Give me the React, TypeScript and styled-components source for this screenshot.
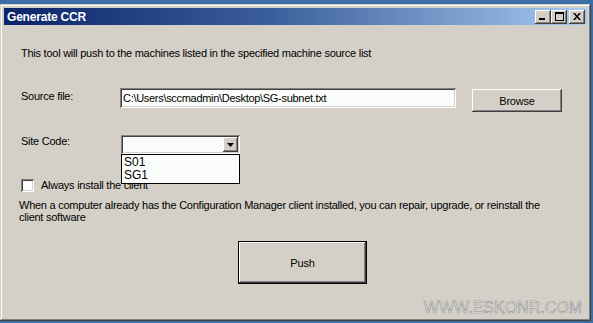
import styled, { createGlobalStyle } from 'styled-components';

const GlobalStyle = createGlobalStyle`
  html, body {
    margin: 0;
    padding: 0;
    background: #3a6ea5;
    width: 593px;
    height: 323px;
    overflow: hidden;
  }
  body {
    font-family: "Liberation Sans", Arial, sans-serif;
    font-size: 11px;
    color: #000;
  }
`;

const raised = `
  box-shadow: inset -1px -1px #404040, inset 1px 1px #ffffff,
    inset -2px -2px #808080, inset 2px 2px #d4d0c8;
`;

const sunken = `
  box-shadow: inset 1px 1px #808080, inset -1px -1px #ffffff,
    inset 2px 2px #404040, inset -2px -2px #d4d0c8;
`;

const WindowFrame = styled.div`
  margin-top: 4px;
  width: 591px;
  height: 317px;
  box-sizing: border-box;
  background: #d4d0c8;
  padding: 4px;
  box-shadow: inset -1px -1px #404040, inset 1px 1px #d4d0c8,
    inset -2px -2px #808080, inset 2px 2px #ffffff;
  display: flex;
  flex-direction: column;
`;

const TitleBar = styled.div`
  height: 19px;
  display: flex;
  align-items: center;
  justify-content: space-between;
  padding: 0 2px 0 3px;
  background: linear-gradient(to right, #0a246a 0%, #3a5e9a 45%, #a6caf0 100%);
`;

const Title = styled.span`
  color: #fff;
  font-weight: bold;
  font-size: 12px;
  letter-spacing: -0.2px;
`;

const Controls = styled.div`
  display: flex;
  align-items: center;
`;

const CaptionButton = styled.div<{ $gap?: number }>`
  width: 16px;
  height: 14px;
  margin-left: ${(p) => p.$gap ?? 0}px;
  background: #d4d0c8;
  display: flex;
  align-items: center;
  justify-content: center;
  ${raised}
`;

const Client = styled.div`
  flex: 1;
  display: flex;
  flex-direction: column;
  padding: 0 4px 0 17px;
  letter-spacing: -0.25px;
`;

const Intro = styled.p`
  margin: 22px 0 0;
  line-height: 13px;
`;

const FieldRow = styled.div<{ $top: number; $labelWidth: number }>`
  margin-top: ${(p) => p.$top}px;
  display: grid;
  grid-template-columns: ${(p) => p.$labelWidth}px max-content max-content;
  justify-content: start;
  align-items: start;
`;

const Label = styled.span<{ $offset?: number }>`
  line-height: 13px;
  margin-top: ${(p) => p.$offset ?? 0}px;
`;

const TextBox = styled.div`
  width: 336px;
  height: 20px;
  box-sizing: border-box;
  padding: 3px 3px 0;
  background: #f9fcf8;
  line-height: 14px;
  letter-spacing: -0.3px;
  white-space: nowrap;
  ${sunken}
`;

const ButtonSlot = styled.div`
  margin: 1px 0 0 16px;
`;

const Button = styled.div<{ $w: number; $h: number; $default?: boolean }>`
  width: ${(p) => p.$w}px;
  height: ${(p) => p.$h}px;
  box-sizing: border-box;
  background: #d4d0c8;
  display: flex;
  align-items: center;
  justify-content: center;
  letter-spacing: -0.2px;
  ${(p) =>
    p.$default
      ? `border: 1px solid #000;
         box-shadow: inset -1px -1px #404040, inset 1px 1px #ffffff,
           inset -2px -2px #808080, inset 2px 2px #d4d0c8;`
      : raised}
`;

const ComboWrap = styled.div`
  position: relative;
  width: 119px;
`;

const Combo = styled.div`
  height: 19px;
  box-sizing: border-box;
  background: #f9fcf8;
  display: flex;
  justify-content: flex-end;
  padding: 2px;
  ${sunken}
`;

const DropButton = styled.div`
  width: 15px;
  height: 15px;
  background: #d4d0c8;
  display: flex;
  align-items: center;
  justify-content: center;
  ${raised}
`;

const DropList = styled.ul`
  position: absolute;
  top: 100%;
  left: 0;
  width: 119px;
  margin: 0;
  padding: 1px 0 1px 1px;
  box-sizing: border-box;
  list-style: none;
  background: #f9fcf8;
  border: 1px solid #000;
  z-index: 2;
  letter-spacing: 0;
`;

const DropItem = styled.li`
  line-height: 13px;
  font-size: 12px;
  padding-left: 1px;
`;

const CheckRow = styled.label`
  margin-top: 25px;
  display: flex;
  align-items: center;
  gap: 7px;
  height: 13px;
  line-height: 13px;
`;

const CheckBox = styled.span`
  width: 13px;
  height: 13px;
  box-sizing: border-box;
  background: #fff;
  ${sunken}
`;

const Description = styled.p`
  margin: 7px 0 0 -2px;
  line-height: 12px;
`;

const PushRow = styled.div`
  margin: 18px 0 0 217px;
`;

const Watermark = styled.div`
  margin-top: 15px;
  align-self: flex-end;
  margin-right: 1px;
  font-size: 16px;
  line-height: 18px;
  letter-spacing: 0;
  color: #f2f2f0;
  -webkit-text-stroke: 0.6px #8c8c8c;
`;

export default function App() {
  return (
    <>
      <GlobalStyle />
      <WindowFrame>
        <TitleBar>
          <Title>Generate CCR</Title>
          <Controls>
            <CaptionButton>
              <svg width="8" height="7" viewBox="0 0 8 7">
                <rect x="0" y="5" width="6" height="2" fill="#000" />
              </svg>
            </CaptionButton>
            <CaptionButton>
              <svg width="9" height="9" viewBox="0 0 9 9">
                <rect x="0.5" y="0.5" width="8" height="8" fill="none" stroke="#000" />
                <rect x="0" y="0" width="9" height="2" fill="#000" />
              </svg>
            </CaptionButton>
            <CaptionButton $gap={2}>
              <svg width="8" height="7" viewBox="0 0 8 7">
                <path d="M0 0h2l2 2.5L6 0h2L5 3.5 8 7H6L4 4.5 2 7H0l3-3.5z" fill="#000" />
              </svg>
            </CaptionButton>
          </Controls>
        </TitleBar>
        <Client>
          <Intro>This tool will push to the machines listed in the specified machine source list</Intro>
          <FieldRow $top={28} $labelWidth={99}>
            <Label $offset={2}>Source file:</Label>
            <TextBox>C:\Users\sccmadmin\Desktop\SG-subnet.txt</TextBox>
            <ButtonSlot>
              <Button $w={90} $h={23}>Browse</Button>
            </ButtonSlot>
          </FieldRow>
          <FieldRow $top={23} $labelWidth={100}>
            <Label $offset={0}>Site Code:</Label>
            <ComboWrap>
              <Combo>
                <DropButton>
                  <svg width="7" height="4" viewBox="0 0 7 4">
                    <path d="M0 0h7L3.5 4z" fill="#000" />
                  </svg>
                </DropButton>
              </Combo>
              <DropList>
                <DropItem>S01</DropItem>
                <DropItem>SG1</DropItem>
              </DropList>
            </ComboWrap>
          </FieldRow>
          <CheckRow>
            <CheckBox />
            Always install the client
          </CheckRow>
          <Description>
            When a computer already has the Configuration Manager client installed, you can repair, upgrade, or reinstall the
            <br />
            client software
          </Description>
          <PushRow>
            <Button $w={129} $h={43} $default>Push</Button>
          </PushRow>
          <Watermark>WWW.ESKONR.COM</Watermark>
        </Client>
      </WindowFrame>
    </>
  );
}
